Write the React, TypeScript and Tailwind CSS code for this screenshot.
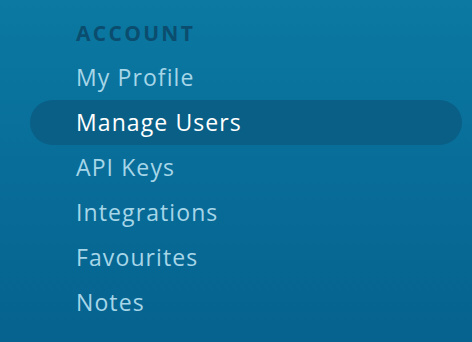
import React from "react";

const items = ["My Profile", "Manage Users", "API Keys", "Integrations", "Favourites", "Notes"];

export default function App() {
  return (
    <div
      className="w-[472px] h-[342px] overflow-hidden bg-gradient-to-b from-[#0b79a2] to-[#06628f] pt-[18px] pl-[30px] pr-[10px]"
      style={{ fontFamily: "'Open Sans', 'Noto Sans', sans-serif" }}
    >
      <div className="pl-[46px] text-[21px] font-bold tracking-[2.3px] leading-[30px] text-[#0b4d6e]">ACCOUNT</div>
      <div className="mt-[7px] flex flex-col">
        {items.map((it) => {
          const active = it === "Manage Users";
          return (
            <div
              key={it}
              className={
                "h-[45px] pl-[46px] flex items-center rounded-full text-[23px] tracking-[1.1px] " +
                (active ? "bg-[#0a5f86] text-white" : "text-[#a6d6e8]")
              }
            >
              {it}
            </div>
          );
        })}
      </div>
    </div>
  );
}
